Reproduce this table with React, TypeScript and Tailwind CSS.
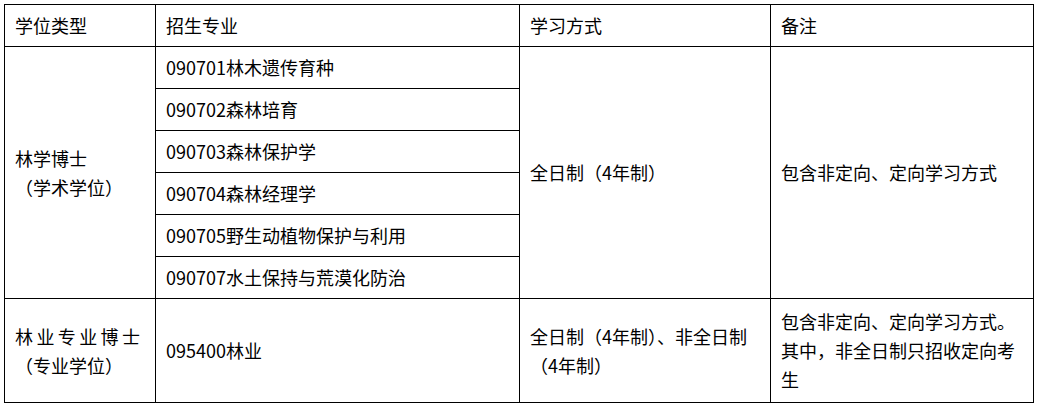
const majors = [
  '090701林木遗传育种',
  '090702森林培育',
  '090703森林保护学',
  '090704森林经理学',
  '090705野生动植物保护与利用',
  '090707水土保持与荒漠化防治',
]

const cell = 'border border-black px-[10px] align-middle'

export default function App() {
  return (
    <div className="bg-white p-[4px] text-[18px] leading-[29px] text-black [font-family:'Noto_Sans_CJK_SC','Noto_Sans',sans-serif]">
      <table className="table-fixed border-collapse">
        <colgroup>
          <col className="w-[151px]" />
          <col className="w-[364px]" />
          <col className="w-[251px]" />
          <col className="w-[263px]" />
        </colgroup>
        <thead>
          <tr className="h-[42px]">
            <th className={`${cell} text-left font-normal`}>学位类型</th>
            <th className={`${cell} text-left font-normal`}>招生专业</th>
            <th className={`${cell} text-left font-normal`}>学习方式</th>
            <th className={`${cell} text-left font-normal`}>备注</th>
          </tr>
        </thead>
        <tbody>
          {majors.map((major, i) => (
            <tr key={major} className="h-[42px]">
              {i === 0 ? (
                <td rowSpan={6} className={cell}>
                  <div>林学博士</div>
                  <div>（学术学位）</div>
                </td>
              ) : null}
              <td className={cell}>{major}</td>
              {i === 0 ? (
                <>
                  <td rowSpan={6} className={cell}>
                    全日制（4年制）
                  </td>
                  <td rowSpan={6} className={cell}>
                    包含非定向、定向学习方式
                  </td>
                </>
              ) : null}
            </tr>
          ))}
          <tr className="h-[104px]">
            <td className={cell}>
              <div className="tracking-[3.4px]">林业专业博士</div>
              <div>（专业学位）</div>
            </td>
            <td className={cell}>095400林业</td>
            <td className={cell}>全日制（4年制）、非全日制（4年制）</td>
            <td className={cell}>包含非定向、定向学习方式。其中，非全日制只招收定向考生</td>
          </tr>
        </tbody>
      </table>
    </div>
  )
}
